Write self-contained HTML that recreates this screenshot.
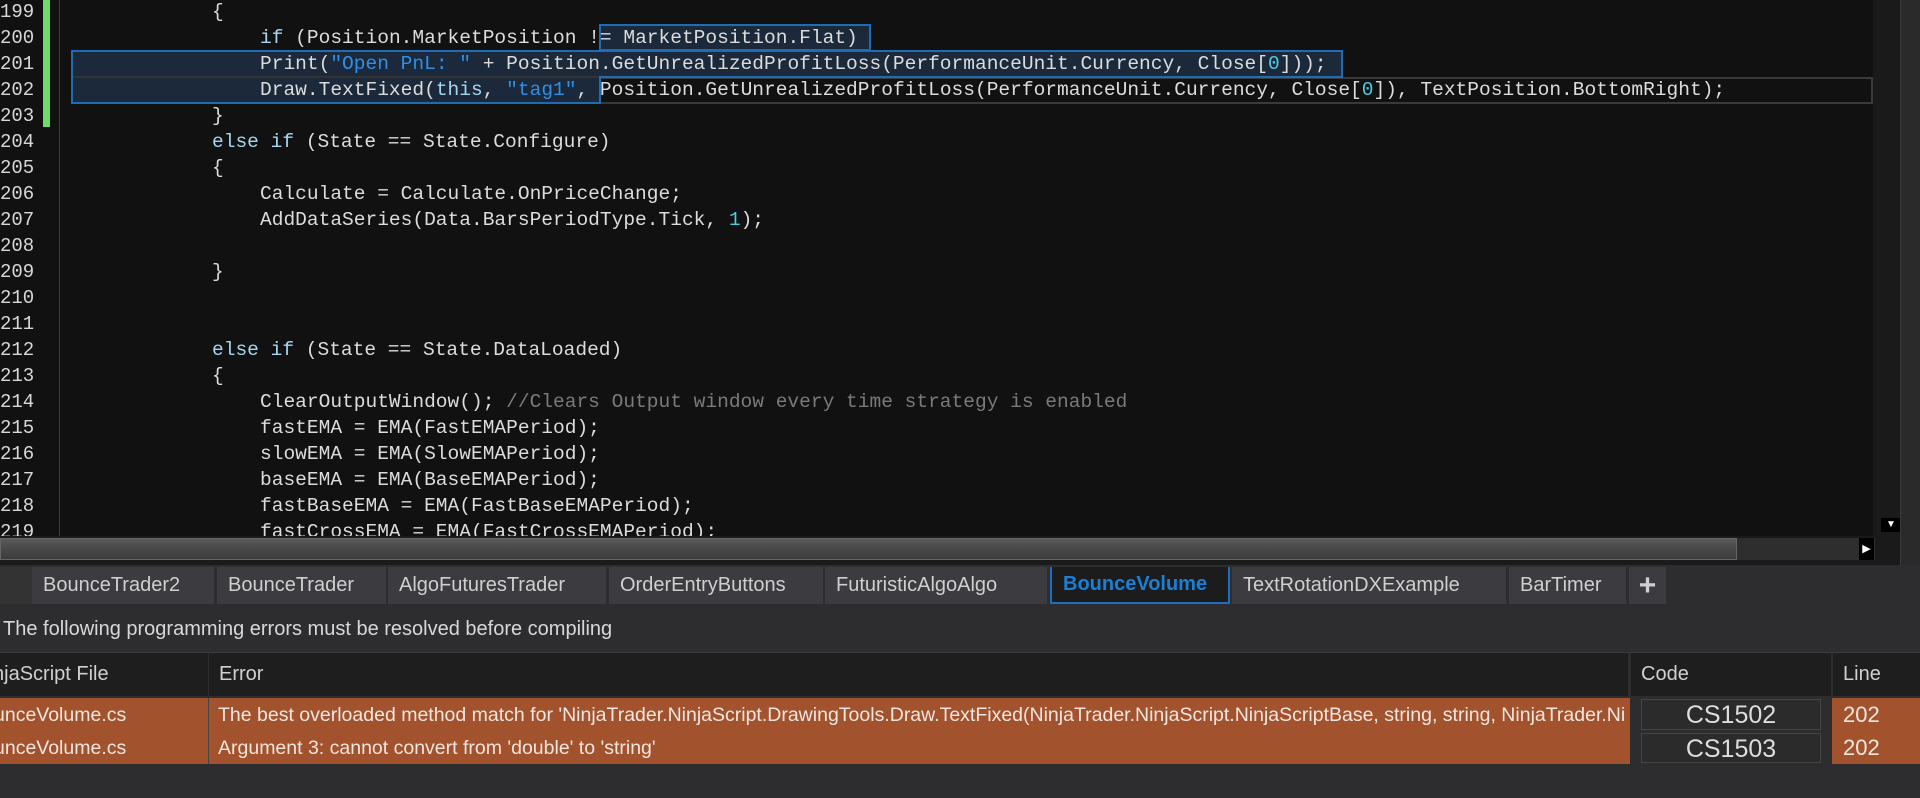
<!DOCTYPE html>
<html><head><meta charset="utf-8"><style>
*{margin:0;padding:0;box-sizing:border-box}
body{width:1920px;height:798px;overflow:hidden;background:#2d2d30;position:relative;font-family:"Liberation Sans",sans-serif}
#ed{position:absolute;left:0;top:0;width:1900px;height:536px;background:#111;overflow:hidden}
.ln{position:absolute;left:0;width:34px;text-align:right;font:19px/26px "Liberation Mono",monospace;color:#d8d8d8}
.cl{position:absolute;left:0;white-space:pre;font:19.55px/26px "Liberation Mono",monospace;color:#dcdcdc}
.k{color:#a6d6f0}.s{color:#2f8fe8}.n{color:#4ec9e0}.c{color:#7a7a7a}
.sel{position:absolute;background:rgba(40,70,110,.45);border:2px solid #1d6cb5}
.tab{position:absolute;top:567px;height:37px;background:#3b3b40;color:#cfcfcf;font-size:20px;line-height:37px;padding-left:11px;white-space:nowrap}
.hdr{position:absolute;top:653px;height:43px;background:#1e1e1e;color:#d0d0d0;font-size:20px;line-height:43px;white-space:nowrap;overflow:hidden}
.row{position:absolute;left:0;width:1920px;background:#a2532e;color:#f0e6e0;font-size:19.5px;white-space:nowrap}
.code{position:absolute;left:1641px;width:180px;background:#2b2b2b;border:1px solid #444;color:#ddd;font-size:25px;text-align:center}
</style></head><body>
<div id="ed">
<div style="position:absolute;left:43px;top:0;width:7px;height:127px;background:#6fdc6a"></div>
<div style="position:absolute;left:59px;top:0;width:1px;height:536px;background:#3a3a3a"></div>
<div style="position:absolute;left:599px;top:77px;width:1274px;height:27px;border:2px solid #3a3a3a"></div>
<div class="sel" style="left:599px;top:24px;width:272px;height:27px"></div>
<div class="sel" style="left:71px;top:50px;width:1272px;height:28px"></div>
<div class="sel" style="left:71px;top:76px;width:530px;height:28px"></div>
<div style="position:absolute;left:73px;top:76px;width:526px;height:2px;background:#333"></div>

<div class="ln" style="top:-1px">199</div><div class="cl" style="top:-1px;left:212px">{</div>
<div class="ln" style="top:25px">200</div><div class="cl" style="top:25px;left:260px"><span class="k">if</span> (Position.MarketPosition != MarketPosition.Flat)</div>
<div class="ln" style="top:51px">201</div><div class="cl" style="top:51px;left:260px">Print(<span class="s">"Open PnL: "</span> + Position.GetUnrealizedProfitLoss(PerformanceUnit.Currency, Close[<span class="n">0</span>]));</div>
<div class="ln" style="top:77px">202</div><div class="cl" style="top:77px;left:260px">Draw.TextFixed(<span class="k">this</span>, <span class="s">"tag1"</span>, Position.GetUnrealizedProfitLoss(PerformanceUnit.Currency, Close[<span class="n">0</span>]), TextPosition.BottomRight);</div>
<div class="ln" style="top:103px">203</div><div class="cl" style="top:103px;left:212px">}</div>
<div class="ln" style="top:129px">204</div><div class="cl" style="top:129px;left:212px"><span class="k">else if</span> (State == State.Configure)</div>
<div class="ln" style="top:155px">205</div><div class="cl" style="top:155px;left:212px">{</div>
<div class="ln" style="top:181px">206</div><div class="cl" style="top:181px;left:260px">Calculate = Calculate.OnPriceChange;</div>
<div class="ln" style="top:207px">207</div><div class="cl" style="top:207px;left:260px">AddDataSeries(Data.BarsPeriodType.Tick, <span class="n">1</span>);</div>
<div class="ln" style="top:233px">208</div>
<div class="ln" style="top:259px">209</div><div class="cl" style="top:259px;left:212px">}</div>
<div class="ln" style="top:285px">210</div>
<div class="ln" style="top:311px">211</div>
<div class="ln" style="top:337px">212</div><div class="cl" style="top:337px;left:212px"><span class="k">else if</span> (State == State.DataLoaded)</div>
<div class="ln" style="top:363px">213</div><div class="cl" style="top:363px;left:212px">{</div>
<div class="ln" style="top:389px">214</div><div class="cl" style="top:389px;left:260px">ClearOutputWindow(); <span class="c">//Clears Output window every time strategy is enabled</span></div>
<div class="ln" style="top:415px">215</div><div class="cl" style="top:415px;left:260px">fastEMA = EMA(FastEMAPeriod);</div>
<div class="ln" style="top:441px">216</div><div class="cl" style="top:441px;left:260px">slowEMA = EMA(SlowEMAPeriod);</div>
<div class="ln" style="top:467px">217</div><div class="cl" style="top:467px;left:260px">baseEMA = EMA(BaseEMAPeriod);</div>
<div class="ln" style="top:493px">218</div><div class="cl" style="top:493px;left:260px">fastBaseEMA = EMA(FastBaseEMAPeriod);</div>
<div class="ln" style="top:519px">219</div><div class="cl" style="top:519px;left:260px">fastCrossEMA = EMA(FastCrossEMAPeriod);</div>
<div style="position:absolute;left:1873px;top:0;width:27px;height:536px;background:#1a1a1a"></div>
<div style="position:absolute;left:1881px;top:518px;width:20px;height:14px;background:#000;color:#fff;font-size:10px;line-height:14px;text-align:center">▼</div>
</div>
<div style="position:absolute;left:1900px;top:0;width:20px;height:565px;background:#2a2a2a;border-left:1px solid #3a3a3a"></div>
<div style="position:absolute;left:0;top:536px;width:1900px;height:29px;background:#1a1a1a"></div>
<div style="position:absolute;left:0;top:538px;width:1737px;height:22px;background:linear-gradient(#5a5a5a,#4a4a4a 45%,#3c3c3c);border:1px solid #666"></div>
<div style="position:absolute;left:1737px;top:538px;width:138px;height:22px;background:#2e2e2e"></div>
<div style="position:absolute;left:1859px;top:538px;width:15px;height:22px;background:#000;color:#fff;font-size:11px;line-height:22px;text-align:center">▶</div>

<div style="position:absolute;left:0;top:567px;width:32px;height:37px;background:#333"></div>
<div class="tab" style="left:32px;width:182px">BounceTrader2</div>
<div class="tab" style="left:217px;width:169px">BounceTrader</div>
<div class="tab" style="left:388px;width:218px">AlgoFuturesTrader</div>
<div class="tab" style="left:609px;width:214px">OrderEntryButtons</div>
<div class="tab" style="left:825px;width:222px">FuturisticAlgoAlgo</div>
<div class="tab" style="left:1050px;width:180px;background:#1c1c1c;border:2px solid #1a6fc0;border-top:none;color:#1b7fd6;font-weight:bold;line-height:35px">BounceVolume</div>
<div class="tab" style="left:1232px;width:274px">TextRotationDXExample</div>
<div class="tab" style="left:1509px;width:117px">BarTimer</div>
<div class="tab" style="left:1629px;width:37px;padding:0;text-align:center;font-size:30px;font-weight:bold">+</div>

<div style="position:absolute;left:3px;top:615px;color:#d8d8d8;font-size:20px;line-height:28px">The following programming errors must be resolved before compiling</div>
<div style="position:absolute;left:0;top:652px;width:1920px;height:1px;background:#3a3a3a"></div>
<div class="hdr" style="left:0;width:208px;text-indent:-7px">njaScript File</div>
<div class="hdr" style="left:209px;width:1419px;padding-left:10px">Error</div>
<div class="hdr" style="left:1631px;width:200px;padding-left:10px">Code</div>
<div class="hdr" style="left:1833px;width:87px;padding-left:10px">Line</div>
<div class="row" style="top:698px;height:34px;line-height:34px"><span style="position:absolute;left:-6px">unceVolume.cs</span><span style="position:absolute;left:218px">The best overloaded method match for 'NinjaTrader.NinjaScript.DrawingTools.Draw.TextFixed(NinjaTrader.NinjaScript.NinjaScriptBase, string, string, NinjaTrader.Ni</span><span style="position:absolute;left:1843px;font-size:22px">202</span></div>
<div class="row" style="top:732px;height:32px;line-height:32px"><span style="position:absolute;left:-6px">unceVolume.cs</span><span style="position:absolute;left:218px">Argument 3: cannot convert from 'double' to 'string'</span><span style="position:absolute;left:1843px;font-size:22px">202</span></div>
<div style="position:absolute;left:208px;top:698px;width:1px;height:66px;background:#444"></div>
<div style="position:absolute;left:1630px;top:698px;width:202px;height:66px;background:#2d2d30"></div>
<div class="code" style="top:699px;height:31px;line-height:31px">CS1502</div>
<div class="code" style="top:733px;height:30px;line-height:30px">CS1503</div>
</body></html>
